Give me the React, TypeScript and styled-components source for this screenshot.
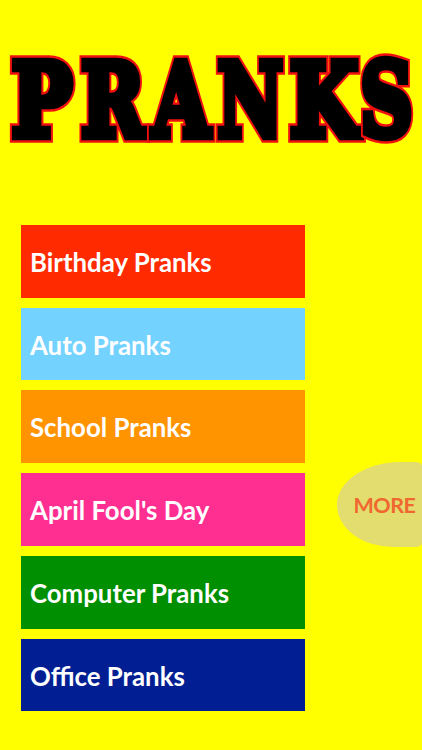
import React from "react";
import styled, { createGlobalStyle } from "styled-components";

const Global = createGlobalStyle`
  html, body { margin: 0; padding: 0; background: #ffff00; }
  body { width: 422px; height: 750px; overflow: hidden; }
`;

const Page = styled.main`
  position: relative;
  width: 422px;
  height: 750px;
  background: #ffff00;
  display: flex;
  flex-direction: column;
  overflow: hidden;
`;

const TitleBar = styled.header`
  height: 225px;
  box-sizing: border-box;
  padding: 36px 0 0 8px;
`;

const Title = styled.h1`
  display: flex;
  margin: 0;
  height: 130px;
  font-family: "DejaVu Serif", "Liberation Serif", serif;
  font-weight: 700;
  font-size: 101px;
  line-height: 130px;
`;

const Slot = styled.span<{ $w: number }>`
  display: flex;
  justify-content: center;
  width: ${(p) => p.$w}px;
`;

const Glyph = styled.span<{ $sx: number }>`
  position: relative;
  display: block;
  flex: none;
  color: #000;
  -webkit-text-stroke: 13.5px #f01010;
  transform: scaleX(${(p) => p.$sx});

  &::after {
    content: attr(data-c);
    position: absolute;
    left: 0;
    top: 0;
    color: #000;
    -webkit-text-stroke: 8.5px #000;
  }
`;

const List = styled.nav`
  display: flex;
  flex-direction: column;
  gap: 10px;
  margin-left: 21px;
  width: 284px;
`;

const Item = styled.a<{ $bg: string; $h: number }>`
  display: flex;
  align-items: center;
  box-sizing: border-box;
  height: ${(p) => p.$h}px;
  padding: 1px 0 0 9px;
  background: ${(p) => p.$bg};
  color: #fff;
  font-family: Lato, "Noto Sans", sans-serif;
  font-weight: 700;
  font-size: 25.8px;
  white-space: nowrap;
`;

const More = styled.button`
  position: absolute;
  left: 337px;
  top: 462px;
  width: 85px;
  height: 85px;
  border: 0;
  padding: 0 0 0 10px;
  background: #e3dd70;
  border-radius: 0;
  border-top-left-radius: 64px 43px;
  border-bottom-left-radius: 56px 42px;
  border-top-right-radius: 6px 4px;
  border-bottom-right-radius: 6px 4px;
  color: #f0682f;
  font-family: Lato, "Noto Sans", sans-serif;
  font-weight: 700;
  font-size: 21.5px;
  letter-spacing: -0.5px;
`;

const letters = [
  { c: "P", w: 68.5, sx: 0.8 },
  { c: "R", w: 72, sx: 0.76 },
  { c: "A", w: 66, sx: 0.73 },
  { c: "N", w: 71, sx: 0.71 },
  { c: "K", w: 77, sx: 0.78 },
  { c: "S", w: 47, sx: 0.72 },
];

const items = [
  { label: "Birthday Pranks", bg: "#ff2a00", h: 73 },
  { label: "Auto Pranks", bg: "#74d2ff", h: 72 },
  { label: "School Pranks", bg: "#ff9300", h: 73 },
  { label: "April Fool's Day", bg: "#ff2f92", h: 73 },
  { label: "Computer Pranks", bg: "#008f00", h: 73 },
  { label: "Office Pranks", bg: "#011f93", h: 72 },
];

export default function App() {
  return (
    <Page>
      <Global />
      <TitleBar>
        <Title>
          {letters.map((l) => (
            <Slot key={l.c} $w={l.w}>
              <Glyph $sx={l.sx} data-c={l.c}>
                {l.c}
              </Glyph>
            </Slot>
          ))}
        </Title>
      </TitleBar>
      <List>
        {items.map((i) => (
          <Item key={i.label} $bg={i.bg} $h={i.h}>
            {i.label}
          </Item>
        ))}
      </List>
      <More>MORE</More>
    </Page>
  );
}
